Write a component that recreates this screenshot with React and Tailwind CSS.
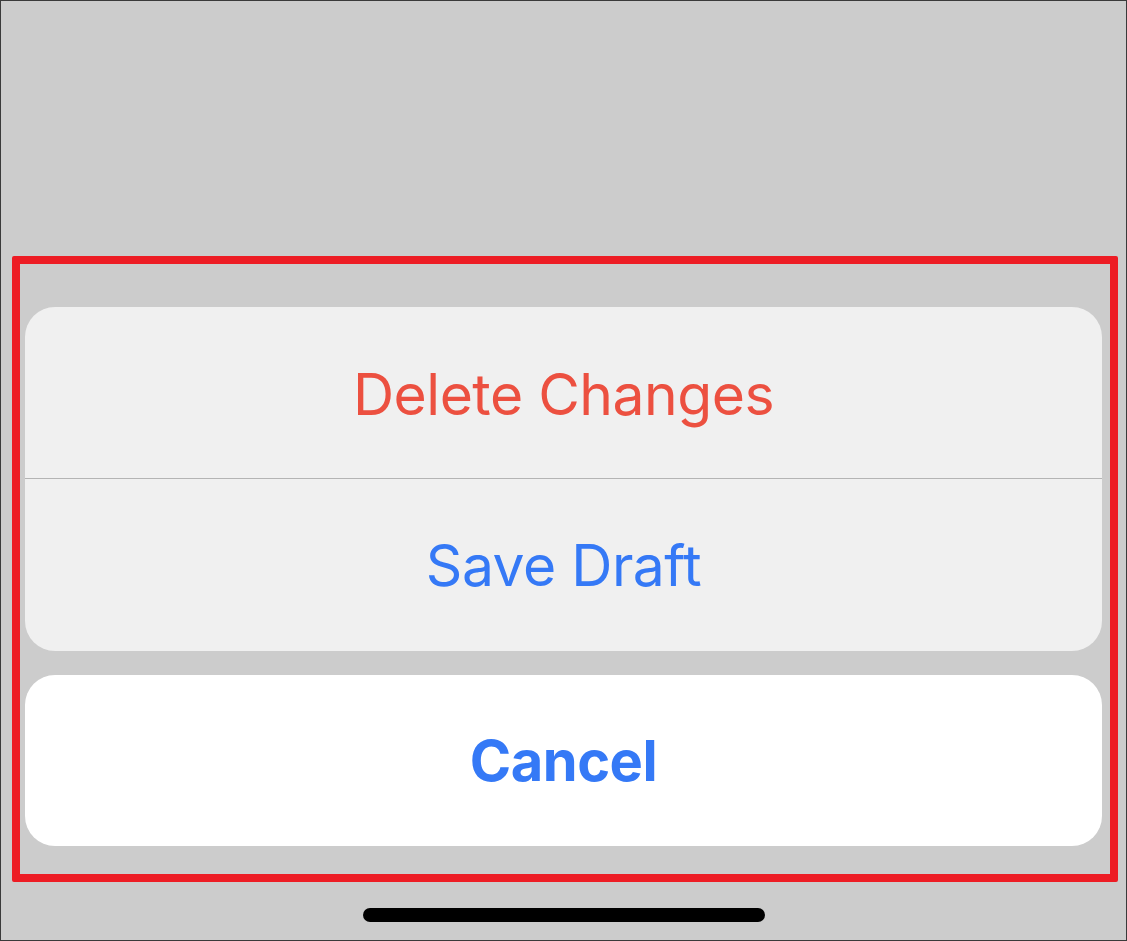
export default function App() {
  const font = { fontFamily: 'Inter, "Liberation Sans", sans-serif' };

  return (
    <div className="w-[1127px] h-[941px] bg-[#cccccc] border border-[#3a3a3a] flex flex-col overflow-hidden" style={font}>
      <div className="h-[255px] shrink-0"></div>

      {/* highlighted action sheet */}
      <div className="ml-[11px] w-[1106px] h-[626px] shrink-0 border-[8px] border-[#ed1c24] rounded-[2px] pl-[5px] pr-[8px] pt-[43px] flex flex-col gap-[24px]">
        <div className="h-[344px] bg-[#f0f0f0] rounded-[30px] flex flex-col overflow-hidden">
          <button className="h-[171px] pt-[4px] flex items-center justify-center text-[#ec5040] text-[57px] tracking-[-0.5px]">
            Delete Changes
          </button>
          <div className="h-px bg-[#b4b4b4]"></div>
          <button className="flex-1 pt-[2px] flex items-center justify-center text-[#3579f6] text-[57px] tracking-[-0.5px]">
            Save Draft
          </button>
        </div>
        <button className="h-[171px] bg-white rounded-[30px] flex items-center justify-center text-[#3579f6] text-[56px] font-bold tracking-[-0.5px]">
          Cancel
        </button>
      </div>

      {/* home indicator */}
      <div className="flex-1 flex items-center justify-center">
        <div className="w-[402px] h-[14px] rounded-full bg-black mt-[8px]"></div>
      </div>
    </div>
  );
}
